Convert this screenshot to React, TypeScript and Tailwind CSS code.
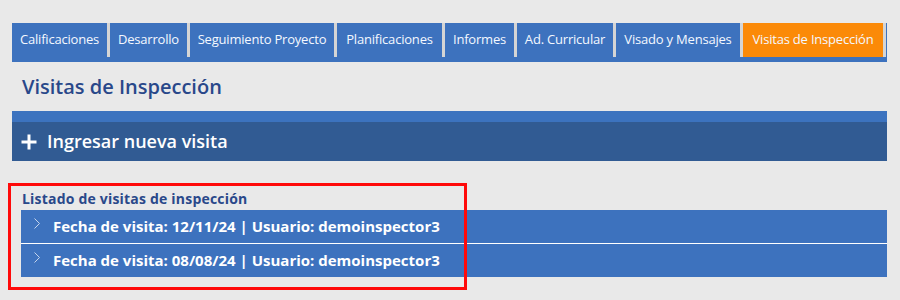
import React from 'react';

const tabs = [
  { label: 'Calificaciones', w: 'w-[98px]' },
  { label: 'Desarrollo', w: 'w-[80px]' },
  { label: 'Seguimiento Proyecto', w: 'w-[147px]' },
  { label: 'Planificaciones', w: 'w-[108px]' },
  { label: 'Informes', w: 'w-[72px]' },
  { label: 'Ad. Curricular', w: 'w-[99px]' },
  { label: 'Visado y Mensajes', w: 'w-[127px]' },
  { label: 'Visitas de Inspección', w: 'w-[143px]', active: true },
];

const visitas = [
  { fecha: '12/11/24', usuario: 'demoinspector3' },
  { fecha: '08/08/24', usuario: 'demoinspector3' },
];

const App: React.FC = () => {
  return (
    <div className="w-[900px] h-[300px] overflow-hidden bg-[#e9e9e9] pl-[12px] pr-[13px] pt-[23px] font-['Open_Sans',sans-serif]">
      {/* Tabs */}
      <div className="bg-[#3d72be] pb-[5px]">
        <div className="flex">
          {tabs.map((t) => (
            <div
              key={t.label}
              className={`${t.w} shrink-0 h-[34px] flex items-center justify-center border-r-[3px] border-[#d5d5d5] text-[13px] tracking-[-0.2px] text-[#f4f8ff] ${t.active ? 'bg-[#fb8a08]' : 'bg-[#3d72be]'}`}
            >
              {t.label}
            </div>
          ))}
        </div>
      </div>

      {/* Title */}
      <h2 className="mt-[11px] pl-[10px] h-[27px] text-[20px] leading-[27px] font-semibold text-[#29488a]">
        Visitas de Inspección
      </h2>

      {/* Nueva visita */}
      <div className="mt-[11px]">
        <div className="h-[11px] bg-[#3c73bf]" />
        <div className="h-[39px] bg-[#315b93] flex items-center gap-[10px] pl-[9px] text-white">
          <svg width="16" height="16" viewBox="0 0 16 16" className="shrink-0">
            <path d="M8 0.5v15M0.5 8h15" stroke="#fff" strokeWidth="3" />
          </svg>
          <span className="text-[18px] font-semibold">Ingresar nueva visita</span>
        </div>
      </div>

      {/* Listado */}
      <div className="relative mt-[27px] pl-[9px]">
        <div className="absolute left-[-4px] top-[-5px] w-[459px] h-[107px] border-[3px] border-[#ff0a0a] pointer-events-none" />
        <div className="pl-[1px] h-[22px] text-[14px] leading-[22px] font-bold tracking-[0.2px] text-[#29488a]">
          Listado de visitas de inspección
        </div>
        <div className="flex flex-col gap-[1px] bg-white">
          {visitas.map((v) => (
            <div key={v.fecha} className="h-[33px] bg-[#3d72be] flex items-center text-white">
              <svg width="6" height="11" viewBox="0 0 6 11" className="ml-[13px] mr-[13px] -mt-[6px] shrink-0">
                <path d="M0.5 0.5l5 5-5 5" stroke="#c5d4ec" strokeWidth="1" fill="none" />
              </svg>
              <span className="text-[15px] font-bold">
                Fecha de visita: {v.fecha} | Usuario: {v.usuario}
              </span>
            </div>
          ))}
        </div>
      </div>
    </div>
  );
};

export default App;
